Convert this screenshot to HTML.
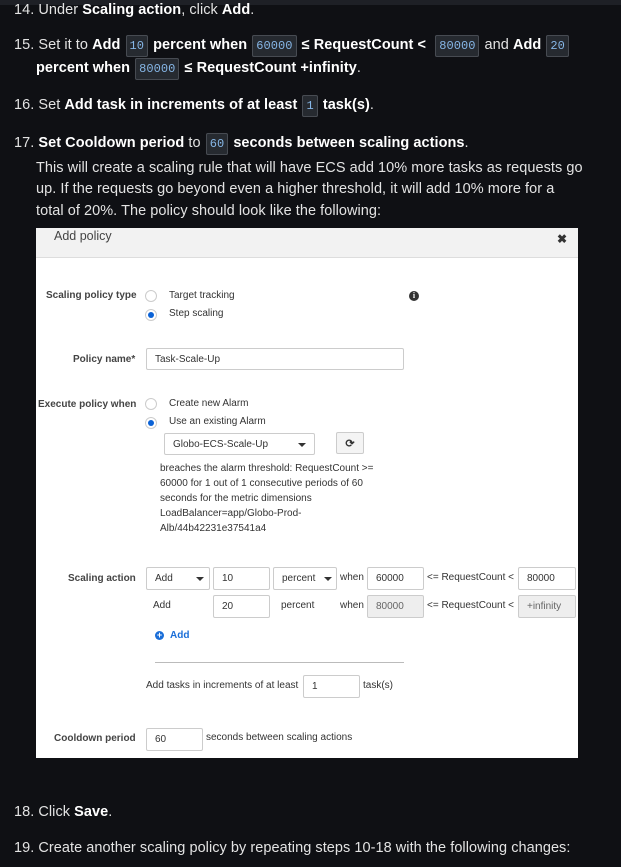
<!DOCTYPE html>
<html><head><meta charset="utf-8"><style>
*{margin:0;padding:0;box-sizing:border-box}
body{width:621px;height:867px;background:#0f1014;color:#e3e3e3;font-family:"Liberation Sans",sans-serif;position:relative;overflow:hidden}
.topbar{position:absolute;left:0;top:0;width:621px;height:5px;background:#1e2026}
.t{position:absolute;font-size:14.5px;white-space:nowrap;letter-spacing:0.05px}
.t b{color:#fff}
.c{font-family:"Liberation Mono",monospace;font-size:12px;color:#86b6e6;background:#262a30;border:1px solid #474b52;border-radius:2px;padding:3px 3px;margin:0 1px}
.shot{position:absolute;left:36px;top:228px;width:542px;height:530px;background:#fff;overflow:hidden}
.hdr{position:absolute;left:0;top:0;width:542px;height:30px;background:#f2f2f2;border-bottom:1px solid #ddd}
.f{position:absolute;font-size:10px;color:#333;white-space:nowrap}
.lb{font-weight:bold;color:#444}
.in{position:absolute;border:1px solid #ccc;border-radius:2px;background:#fff;font-size:10px;color:#333;padding-left:8px;display:flex;align-items:center}
.gr{background:#eee;color:#666}
.rad{position:absolute;width:12px;height:12px;border-radius:50%;border:1px solid #ccc;background:#fff}
.rad.on::after{content:"";position:absolute;left:2px;top:2px;width:6px;height:6px;border-radius:50%;background:#0b62d6}
.car{position:absolute;width:0;height:0;border-left:4px solid transparent;border-right:4px solid transparent;border-top:4px solid #333}
</style></head><body>
<div class="topbar"></div>
<div class="t" style="left:14px;top:2px">14. Under <b>Scaling action</b>, click <b>Add</b>.</div>
<div class="t" style="left:14px;top:37px">15. Set it to <b>Add</b> <span class="c">10</span> <b>percent when</b> <span class="c">60000</span> <b>≤ RequestCount &lt;</b> &nbsp;<span class="c">80000</span> and <b>Add</b> <span class="c">20</span></div>
<div class="t" style="left:36px;top:60px"><b>percent when</b> <span class="c">80000</span> <b>≤ RequestCount +infinity</b>.</div>
<div class="t" style="left:14px;top:97px">16. Set <b>Add task in increments of at least</b> <span class="c">1</span> <b>task(s)</b>.</div>
<div class="t" style="left:14px;top:135px">17. <b>Set Cooldown period</b> to <span class="c">60</span> <b>seconds between scaling actions</b>.</div>
<div class="t" style="left:36px;top:160px">This will create a scaling rule that will have ECS add 10% more tasks as requests go</div>
<div class="t" style="left:36px;top:181px">up. If the requests go beyond even a higher threshold, it will add 10% more for a</div>
<div class="t" style="left:36px;top:203px">total of 20%. The policy should look like the following:</div>

<div class="shot">
<div class="hdr"></div>
<div class="f" style="left:18px;top:1px;font-size:12.5px;color:#444">Add policy</div>
<div class="f" style="left:521px;top:4px;font-size:12px;font-weight:bold;color:#333">✖</div>

<div class="f lb" style="left:10px;top:62px">Scaling policy type</div>
<div class="rad" style="left:109px;top:62px"></div><div class="f" style="left:133px;top:62px">Target tracking</div>
<div class="rad on" style="left:109px;top:81px"></div><div class="f" style="left:133px;top:80px">Step scaling</div>
<div style="position:absolute;left:373px;top:63px;width:10px;height:10px;border-radius:50%;background:#333;color:#fff;font-size:8px;font-weight:bold;text-align:center;line-height:10px;font-family:'Liberation Serif',serif">i</div>

<div class="f lb" style="left:37px;top:126px">Policy name*</div>
<div class="in" style="left:110px;top:120px;width:258px;height:22px">Task-Scale-Up</div>

<div class="f lb" style="left:2px;top:171px">Execute policy when</div>
<div class="rad" style="left:109px;top:170px"></div><div class="f" style="left:133px;top:170px">Create new Alarm</div>
<div class="rad on" style="left:109px;top:189px"></div><div class="f" style="left:133px;top:188px">Use an existing Alarm</div>
<div class="in" style="left:128px;top:205px;width:151px;height:22px">Globo-ECS-Scale-Up</div>
<div class="car" style="left:262px;top:215px"></div>
<div class="in" style="left:300px;top:204px;width:28px;height:22px;background:#f4f4f4;padding:0;justify-content:center;font-size:11px;font-weight:bold">⟳</div>
<div class="f" style="left:124px;top:233px;line-height:15px">breaches the alarm threshold: RequestCount &gt;=<br>60000 for 1 out of 1 consecutive periods of 60<br>seconds for the metric dimensions<br>LoadBalancer=app/Globo-Prod-<br>Alb/44b42231e37541a4</div>

<div class="f lb" style="left:32px;top:345px">Scaling action</div>
<div class="in" style="left:110px;top:339px;width:64px;height:23px">Add</div><div class="car" style="left:160px;top:349px"></div>
<div class="in" style="left:177px;top:339px;width:57px;height:23px">10</div>
<div class="in" style="left:237px;top:339px;width:64px;height:23px">percent</div><div class="car" style="left:288px;top:349px"></div>
<div class="f" style="left:304px;top:344px">when</div>
<div class="in" style="left:331px;top:339px;width:57px;height:23px">60000</div>
<div class="f" style="left:391px;top:344px">&lt;= RequestCount &lt;</div>
<div class="in" style="left:482px;top:339px;width:58px;height:23px">80000</div>

<div class="f" style="left:117px;top:372px">Add</div>
<div class="in" style="left:177px;top:367px;width:57px;height:23px">20</div>
<div class="f" style="left:245px;top:372px">percent</div>
<div class="f" style="left:304px;top:372px">when</div>
<div class="in gr" style="left:331px;top:367px;width:57px;height:23px">80000</div>
<div class="f" style="left:391px;top:372px">&lt;= RequestCount &lt;</div>
<div class="in gr" style="left:482px;top:367px;width:58px;height:23px">+infinity</div>

<div style="position:absolute;left:119px;top:403px;width:9px;height:9px;border-radius:50%;background:#1a6ed8;color:#fff;font-size:9px;font-weight:bold;line-height:9px;text-align:center">+</div>
<div class="f" style="left:134px;top:402px;color:#1a6ed8;font-weight:bold">Add</div>
<div style="position:absolute;left:119px;top:434px;width:249px;height:1px;background:#bbb"></div>

<div class="f" style="left:110px;top:452px">Add tasks in increments of at least</div>
<div class="in" style="left:267px;top:447px;width:57px;height:23px">1</div>
<div class="f" style="left:327px;top:452px">task(s)</div>

<div class="f lb" style="left:18px;top:505px">Cooldown period</div>
<div class="in" style="left:110px;top:500px;width:57px;height:23px">60</div>
<div class="f" style="left:170px;top:504px">seconds between scaling actions</div>
</div>

<div class="t" style="left:14px;top:804px">18. Click <b>Save</b>.</div>
<div class="t" style="left:14px;top:840px">19. Create another scaling policy by repeating steps 10-18 with the following changes:</div>
</body></html>
